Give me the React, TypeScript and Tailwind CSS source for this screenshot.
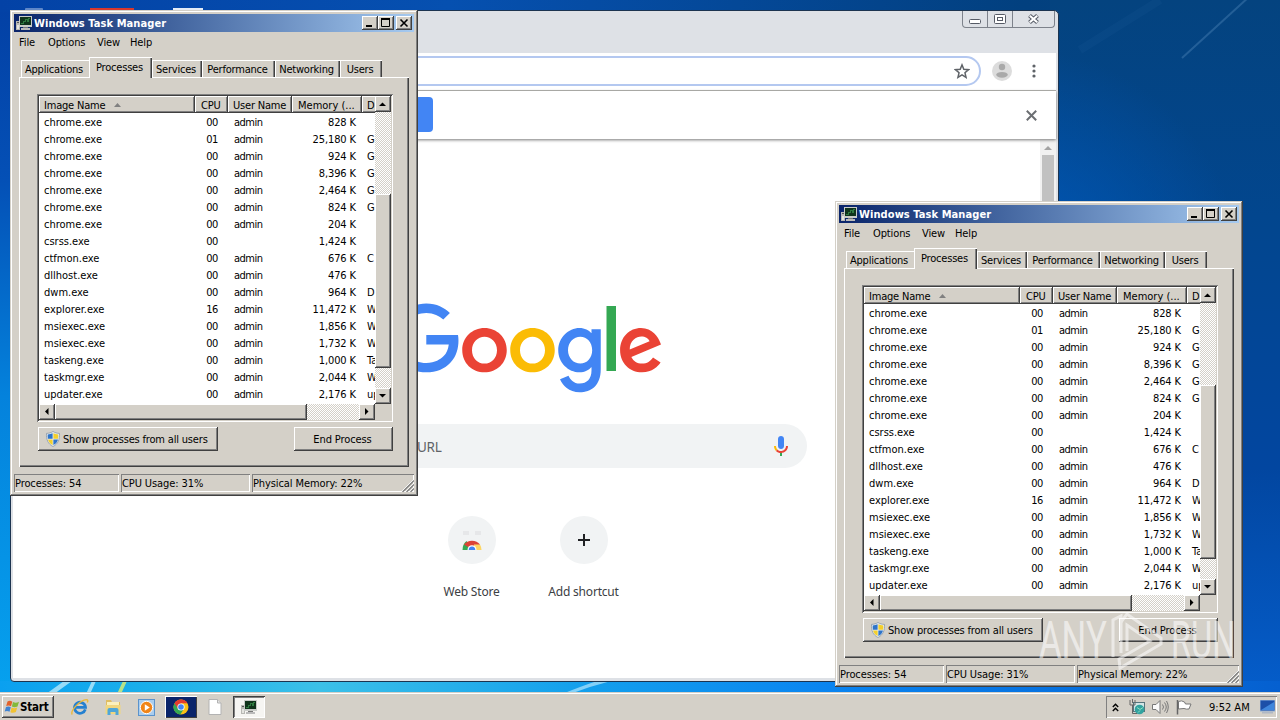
import type { ReactNode } from "react";
import clsx from "clsx";

type Process = {
  name: string;
  cpu: string;
  user: string;
  memory: string;
  description: string;
};

const processes: Process[] = [
  { name: "chrome.exe", cpu: "00", user: "admin", memory: "828 K", description: "" },
  { name: "chrome.exe", cpu: "01", user: "admin", memory: "25,180 K", description: "G" },
  { name: "chrome.exe", cpu: "00", user: "admin", memory: "924 K", description: "G" },
  { name: "chrome.exe", cpu: "00", user: "admin", memory: "8,396 K", description: "G" },
  { name: "chrome.exe", cpu: "00", user: "admin", memory: "2,464 K", description: "G" },
  { name: "chrome.exe", cpu: "00", user: "admin", memory: "824 K", description: "G" },
  { name: "chrome.exe", cpu: "00", user: "admin", memory: "204 K", description: "" },
  { name: "csrss.exe", cpu: "00", user: "", memory: "1,424 K", description: "" },
  { name: "ctfmon.exe", cpu: "00", user: "admin", memory: "676 K", description: "C" },
  { name: "dllhost.exe", cpu: "00", user: "admin", memory: "476 K", description: "" },
  { name: "dwm.exe", cpu: "00", user: "admin", memory: "964 K", description: "D" },
  { name: "explorer.exe", cpu: "16", user: "admin", memory: "11,472 K", description: "W" },
  { name: "msiexec.exe", cpu: "00", user: "admin", memory: "1,856 K", description: "W" },
  { name: "msiexec.exe", cpu: "00", user: "admin", memory: "1,732 K", description: "W" },
  { name: "taskeng.exe", cpu: "00", user: "admin", memory: "1,000 K", description: "Ta" },
  { name: "taskmgr.exe", cpu: "00", user: "admin", memory: "2,044 K", description: "W" },
  { name: "updater.exe", cpu: "00", user: "admin", memory: "2,176 K", description: "up" },
];

const tabs = [
  { label: "Applications", width: "w-[68px]" },
  { label: "Processes", width: "w-[63px]" },
  { label: "Services", width: "w-[50px]" },
  { label: "Performance", width: "w-[73px]" },
  { label: "Networking", width: "w-[65px]" },
  { label: "Users", width: "w-[42px]" },
];

// classic Windows bevels
const raised =
  "bg-[#d4d0c8] shadow-[inset_-1px_-1px_0_#404040,inset_1px_1px_0_#fff,inset_-2px_-2px_0_#808080]";
const sunken = "shadow-[inset_1px_1px_0_#808080,inset_-1px_-1px_0_#fff]";
const checker =
  "bg-[conic-gradient(#fff_25%,#d4d0c8_0_50%,#fff_0_75%,#d4d0c8_0)] bg-[length:2px_2px]";

const TaskManagerIcon = () => (
  <svg width="16" height="16" viewBox="0 0 16 16" shapeRendering="crispEdges">
    <rect x="0" y="6" width="4" height="9" fill="#b8b8b4" />
    <rect x="1" y="7" width="2" height="1" fill="#555" />
    <rect x="1" y="10" width="2" height="4" fill="#e4e4e0" />
    <rect x="3" y="1" width="13" height="11" fill="#c9cbc8" />
    <rect x="4" y="2" width="11" height="8" fill="#10331b" />
    <path d="M5 8h2V6h2V4h2v2h1V3h2" fill="none" stroke="#2f7a40" />
    <rect x="7" y="12" width="5" height="1" fill="#777" />
    <rect x="5" y="13" width="9" height="2" fill="#bbb" />
  </svg>
);

const Shield = () => (
  <svg width="16" height="16" viewBox="0 0 16 16">
    <path d="M8 .5c2 1.300 4 1.800 6.500 1.900.3 6-1.300 10.500-6.500 13.100C2.800 12.900 1.200 8.400 1.500 2.400 4 2.300 6 1.800 8 .5z" fill="#e8eef4" stroke="#8997a5" strokeWidth=".8" />
    <path d="M7.600 2.300v5.400H2.900C2.700 6.200 2.600 5 2.700 3.500c1.900-.1 3.500-.5 4.900-1.200z" fill="#2f74c8" />
    <path d="M8.400 2.300v5.400h4.700c.2-1.500.3-2.700.2-4.200-1.900-.1-3.500-.5-4.900-1.200z" fill="#f3cf2c" />
    <path d="M7.600 8.400v5.700C5 12.600 3.600 10.800 3 8.400z" fill="#f3cf2c" />
    <path d="M8.400 8.400v5.700c2.600-1.500 4-3.300 4.600-5.700z" fill="#2f74c8" />
  </svg>
);

const arrows = {
  up: "M4 10h7L7.500 6.500z",
  down: "M4 6h7l-3.500 3.500z",
  left: "M9.500 4v7L6 7.500z",
  right: "M6 4v7l3.500-3.500z",
};

const ScrollButton = ({ dir }: { dir: keyof typeof arrows }) => (
  <div className={clsx("size-4 shrink-0", raised)}>
    <svg width="16" height="16" viewBox="0 0 16 16">
      <path d={arrows[dir]} fill="#000" />
    </svg>
  </div>
);

const CaptionButton = ({ children }: { children: ReactNode }) => (
  <div className={clsx("h-[14px] w-4", raised)}>
    <svg width="16" height="14" viewBox="0 0 16 14" fill="none" stroke="#000">
      {children}
    </svg>
  </div>
);

const HeaderCell = ({ className, children }: { className?: string; children: ReactNode }) => (
  <div className={clsx("h-full shrink-0 overflow-hidden pl-[5px] leading-[19px] tracking-[-0.200px]", raised, className)}>
    {children}
  </div>
);

const StatusCell = ({ className, children }: { className?: string; children: ReactNode }) => (
  <div className={clsx("pl-px leading-[20px] tracking-[-0.100px]", sunken, className)}>{children}</div>
);

const TaskManager = ({ className }: { className: string }) => (
  <div
    className={clsx(
      "absolute flex h-[486px] w-[408px] flex-col whitespace-nowrap bg-[#d4d0c8] p-1 text-black",
      "shadow-[inset_-1px_-1px_0_#404040,inset_1px_1px_0_#d4d0c8,inset_-2px_-2px_0_#808080,inset_2px_2px_0_#fff]",
      className,
    )}
  >
    <div className="flex h-[18px] shrink-0 items-center bg-linear-to-r from-[#0a246a] to-[#a6caf0] pr-[2px] pl-[2px]">
      <TaskManagerIcon />
      <span className="ml-[2px] grow pt-[2px] text-[11px] font-bold tracking-[0.080px] text-white">Windows Task Manager</span>
      <CaptionButton>
        <path d="M4 10h6" strokeWidth="2" />
      </CaptionButton>
      <CaptionButton>
        <path d="M3.500 3v7.500h8V3" />
        <path d="M3 3h9" strokeWidth="2" />
      </CaptionButton>
      <div className="w-[2px]" />
      <CaptionButton>
        <path d="M4.500 3.500l7 7m0-7l-7 7" strokeWidth="1.600" />
      </CaptionButton>
    </div>

    <div className="flex h-5 shrink-0 items-center pt-[2px] pl-[5px] tracking-[-0.120px]">
      <span className="w-[29px]">File</span>
      <span className="w-[49px]">Options</span>
      <span className="w-[33px]">View</span>
      <span>Help</span>
    </div>

    <div className="mt-[5px] ml-[7px] flex h-5 shrink-0 items-end">
      {tabs.map((tab) => {
        const active = tab.label === "Processes";
        return (
          <div
            key={tab.label}
            className={clsx(
              "shrink-0 border-t border-l border-white pr-[3px] text-center tracking-[-0.200px]",
              tab.width,
              active ? "relative z-10 -mb-px h-[21px] leading-[19px]" : "h-[17px] leading-[17px]",
              tab.label !== "Applications" && "shadow-[inset_-1px_0_0_#404040,inset_-2px_0_0_#808080]",
              tab.label === "Applications" && "pr-0",
              active && "bg-[#d4d0c8]",
            )}
          >
            {tab.label}
          </div>
        );
      })}
    </div>

    <div className="mr-[5px] ml-[5px] flex h-[390px] shrink-0 flex-col pt-[17px] pr-4 pl-[18px] shadow-[inset_1px_1px_0_#fff,inset_-1px_-1px_0_#404040,inset_-2px_-2px_0_#808080]">
      <div className="flex h-[328px] w-[356px] shrink-0 flex-col p-[2px] shadow-[inset_1px_1px_0_#808080,inset_-1px_-1px_0_#fff,inset_2px_2px_0_#404040,inset_-2px_-2px_0_#d4d0c8]">
        <div className="flex h-[308px]">
          <div className="w-[336px] overflow-hidden bg-white">
            <div className="flex h-[17px]">
              <HeaderCell className="w-[156px]">
                Image Name
                <svg className="ml-[9px] inline-block align-[2px]" width="7" height="4" viewBox="0 0 7 4">
                  <path d="M0 4h7L3.500 0z" fill="#808080" />
                </svg>
              </HeaderCell>
              <HeaderCell className="w-[33px]">
                <span className="ml-px">CPU</span>
              </HeaderCell>
              <HeaderCell className="w-16">User Name</HeaderCell>
              <HeaderCell className="w-[70px]">
                <span className="ml-px tracking-normal">Memory (...</span>
              </HeaderCell>
              <HeaderCell className="w-[60px]">D</HeaderCell>
            </div>
            {processes.map((p, i) => (
              <div key={i} className="flex h-[17px] leading-[19px]">
                <span className="w-[156px] shrink-0 pl-[5px]">{p.name}</span>
                <span className="w-[23px] shrink-0 text-right tracking-[-0.400px]">{p.cpu}</span>
                <span className="ml-[10px] w-16 shrink-0 pl-[6px] tracking-[-0.500px]">{p.user}</span>
                <span className="w-[64px] shrink-0 text-right tracking-[-0.100px]">{p.memory}</span>
                <span className="ml-[11px] shrink-0">{p.description}</span>
              </div>
            ))}
          </div>
          <div className={clsx("flex w-4 flex-col", checker)}>
            <ScrollButton dir="up" />
            <div className="h-[82px]" />
            <div className={clsx("h-[174px]", raised)} />
            <div className="grow" />
            <ScrollButton dir="down" />
          </div>
        </div>
        <div className="flex h-4 bg-[#d4d0c8]">
          <div className={clsx("flex w-[336px]", checker)}>
            <ScrollButton dir="left" />
            <div className={clsx("w-[252px]", raised)} />
            <div className="grow" />
            <ScrollButton dir="right" />
          </div>
        </div>
      </div>
      <div className="mt-[5px] flex h-6 justify-between pl-px">
        <div className={clsx("flex w-[180px] items-center pl-[7px]", raised)}>
          <Shield />
          <span className="ml-[2px] pt-[2px] tracking-[-0.180px]">Show processes from all users</span>
        </div>
        <div className={clsx("w-[99px] pr-[2px] text-center leading-[26px] tracking-[-0.100px]", raised)}>End Process</div>
      </div>
    </div>

    <div className="mt-[7px] flex h-[18px] shrink-0 gap-[2px]">
      <StatusCell className="w-[105px]">Processes: 54</StatusCell>
      <StatusCell className="w-[129px]">CPU Usage: 31%</StatusCell>
      <StatusCell className="flex grow justify-between">
        Physical Memory: 22%
        <svg className="self-end" width="13" height="13" viewBox="0 0 13 13">
          <path d="M0 13L13 0M4 13l9-9M8 13l5-5" stroke="#fff" />
          <path d="M1.500 13L13 1.500M5.500 13L13 5.500M9.500 13L13 9.500" stroke="#808080" strokeWidth="1.400" />
        </svg>
      </StatusCell>
    </div>
  </div>
);

const GoogleLogo = () => (
  <svg width="272" height="92" viewBox="0 0 272 92">
    <path fill="#4285f4" d="M35.290 41.410V32H67c.31 1.640.47 3.580.47 5.680 0 7.060-1.930 15.790-8.150 22.010-6.050 6.300-13.780 9.660-24.020 9.660C16.320 69.350.36 53.890.36 34.910.36 15.930 16.320.47 35.300.47c10.500 0 17.980 4.120 23.600 9.490l-6.640 6.640c-4.030-3.780-9.490-6.720-16.970-6.720-13.860 0-24.700 11.170-24.700 25.030 0 13.860 10.840 25.030 24.700 25.030 8.990 0 14.110-3.610 17.390-6.890 2.660-2.660 4.410-6.460 5.100-11.650l-22.490.01z" />
    <path fill="#ea4335" d="M115.750 47.180c0 12.770-9.990 22.180-22.250 22.180s-22.250-9.410-22.250-22.180C71.250 34.320 81.240 25 93.500 25s22.250 9.320 22.250 22.180zm-9.740 0c0-7.980-5.790-13.440-12.510-13.440S80.990 39.200 80.990 47.180c0 7.900 5.790 13.440 12.510 13.440s12.510-5.550 12.510-13.440z" />
    <path fill="#fbbc05" d="M163.750 47.180c0 12.770-9.990 22.180-22.250 22.180s-22.250-9.410-22.250-22.180c0-12.860 9.990-22.180 22.250-22.180s22.250 9.320 22.250 22.180zm-9.740 0c0-7.980-5.790-13.440-12.510-13.440s-12.510 5.460-12.510 13.440c0 7.900 5.790 13.440 12.510 13.440s12.510-5.550 12.510-13.440z" />
    <path fill="#4285f4" d="M209.750 26.340v39.820c0 16.380-9.660 23.070-21.080 23.070-10.750 0-17.220-7.190-19.660-13.070l8.480-3.530c1.510 3.610 5.210 7.870 11.170 7.870 7.310 0 11.840-4.510 11.840-13v-3.190h-.34c-2.180 2.690-6.380 5.040-11.680 5.040-11.090 0-21.250-9.660-21.250-22.090 0-12.520 10.160-22.260 21.250-22.260 5.290 0 9.490 2.350 11.680 4.960h.34v-3.610h9.250zm-8.560 20.920c0-7.810-5.210-13.520-11.840-13.520-6.720 0-12.350 5.710-12.350 13.520 0 7.730 5.630 13.360 12.350 13.360 6.630 0 11.840-5.630 11.840-13.360z" />
    <path fill="#34a853" d="M225 3v65h-9.500V3h9.500z" />
    <path fill="#ea4335" d="M262.020 54.480l7.560 5.040c-2.440 3.610-8.320 9.830-18.480 9.830-12.600 0-22.010-9.740-22.010-22.180 0-13.190 9.490-22.180 20.920-22.180 11.510 0 17.140 9.160 18.980 14.110l1.010 2.520-29.650 12.280c2.270 4.450 5.800 6.720 10.750 6.720 4.960 0 8.400-2.440 10.920-6.140zm-23.270-7.980l19.820-8.230c-1.090-2.770-4.370-4.700-8.230-4.700-4.950 0-11.840 4.370-11.590 12.930z" />
  </svg>
);

const Mic = () => (
  <svg width="24" height="24" viewBox="0 0 24 24">
    <path fill="#4285f4" d="M12 15c1.700 0 3-1.300 3-3V5c0-1.700-1.300-3-3-3S9 3.300 9 5v7c0 1.700 1.300 3 3 3z" />
    <path fill="#34a853" d="M11 18.100h2V22h-2z" />
    <path fill="#fbbc05" d="M7 12H5c0 1.900.8 3.700 2 4.900l1.400-1.400C7.600 14.600 7 13.300 7 12z" />
    <path fill="#ea4335" d="M12 17c-1.400 0-2.600-.5-3.600-1.500L7 16.900C8.300 18.200 10 19 12 19c3.900 0 7-3.100 7-7h-2c0 2.800-2.200 5-5 5z" />
  </svg>
);

const Shortcut = ({ label, children }: { label: string; children: ReactNode }) => (
  <div className="flex w-28 flex-col items-center">
    <div className="flex size-12 items-center justify-center rounded-full bg-[#f1f3f4]">{children}</div>
    <span className="mt-[19px] font-['Noto_Sans',sans-serif] text-[12px] leading-[18px] tracking-[-0.200px] text-[#3c4043]">
      {label}
    </span>
  </div>
);

const ChromeWindow = () => (
  <div className="absolute top-[10px] left-[10px] flex h-[672px] w-[1049px] flex-col rounded-t-[5px] rounded-b-[4px] border border-[#1c3450] bg-[#dee1e6] pr-[2px] pb-[3px] pl-[2px]">
    <div className="flex h-[42px] shrink-0 justify-end pr-[1px]">
      <div className="flex h-[17px] w-[93px] rounded-b-[4px] border border-t-0 border-[#7d828b]">
        <div className="w-[25px] border-r border-[#7d828b]">
          <svg width="24" height="16" viewBox="0 0 24 16">
            <rect x="6.500" y="8.500" width="11" height="4" rx="1" fill="#fff" stroke="#565b66" />
          </svg>
        </div>
        <div className="w-[25px] border-r border-[#7d828b]">
          <svg width="24" height="16" viewBox="0 0 24 16" fill="#fff" stroke="#565b66">
            <rect x="6.500" y="3.500" width="11" height="9" rx="1" />
            <rect x="9.500" y="6.500" width="5" height="3" />
          </svg>
        </div>
        <svg width="41" height="16" viewBox="0 0 41 16">
          <path d="M16.500 4.500l8 7m0-7l-8 7" stroke="#565b66" strokeWidth="4.200" />
          <path d="M16.800 4.700l7.400 6.600m0-6.600l-7.400 6.600" stroke="#fff" strokeWidth="2.200" />
        </svg>
      </div>
    </div>

    <div className="flex h-[38px] shrink-0 items-center border-b border-[#b3b2ae] bg-white pb-px">
      <div className="ml-[110px] flex h-[30px] w-[858px] items-center justify-end rounded-full border-2 border-[#b4c8f0] pr-[9px]">
        <svg width="16" height="16" viewBox="0 0 24 24" fill="none" stroke="#5f6368" strokeWidth="2.200">
          <path d="M12 2.800l2.700 6.600 7.100.6-5.400 4.600 1.700 7L12 17.900l-6.100 3.700 1.700-7L2.200 10l7.100-.6z" />
        </svg>
      </div>
      <svg className="ml-[11px]" width="20" height="20" viewBox="0 0 20 20">
        <circle cx="10" cy="10" r="10" fill="#dcdcdc" />
        <circle cx="10" cy="6" r="3.200" fill="#a9a9a9" />
        <ellipse cx="10" cy="13.800" rx="5.800" ry="2.900" fill="#a9a9a9" />
      </svg>
      <svg className="ml-[20px]" width="4" height="14" viewBox="0 0 4 14" fill="#5f6368">
        <circle cx="2" cy="2" r="1.600" />
        <circle cx="2" cy="7" r="1.600" />
        <circle cx="2" cy="12" r="1.600" />
      </svg>
    </div>

    <div className="relative flex h-12 shrink-0 items-center bg-white shadow-[0_1px_3px_#777]">
      <div className="mb-px ml-[300px] h-[35px] w-[120px] rounded-[4px] bg-[#4285f4]" />
      <svg className="mr-[19px] ml-auto" width="11" height="11" viewBox="0 0 11 11">
        <path d="M.8.8l9.400 9.400M10.200.8L.8 10.200" stroke="#6b6e72" strokeWidth="2" />
      </svg>
    </div>

    <div className="flex grow bg-white">
      <div className="flex w-[1027px] flex-col items-center pt-[164px]">
        <div className="pl-px">
          <GoogleLogo />
        </div>
        <div className="mt-[29px] flex h-11 w-[560px] items-center justify-between rounded-full bg-[#f1f3f4] pr-[14px] pl-[14px]">
          <span className="w-[181px] pt-[2px] text-right font-['Noto_Sans',sans-serif] text-[13.500px] tracking-[-0.300px] whitespace-nowrap text-[#5f6368]">
            Search Google or type a URL
          </span>
          <Mic />
        </div>
        <div className="mt-12 flex pl-[2px]">
          <Shortcut label="Web Store">
            <svg width="24" height="24" viewBox="0 0 24 24">
              <path d="M3 3h6v4H3zM15 3h6v4h-6z" fill="#e6e7e9" />
              <path d="M2.500 22a9.500 11 0 0 1 4-9l5.500 9z" fill="#34a853" />
              <path d="M4 16.500a9.500 8 0 0 1 16 0L17 19H8z" fill="#db4437" />
              <path d="M14 16.500h6q1.500 2.500 1.500 5.500H14z" fill="#fdd663" />
              <path d="M7.500 22a4.500 4.800 0 0 1 9 0z" fill="#fff" />
              <path d="M8.700 22a3.300 3.500 0 0 1 6.600 0z" fill="#4285f4" />
            </svg>
          </Shortcut>
          <Shortcut label="Add shortcut">
            <svg width="12" height="12" viewBox="0 0 12 12">
              <path d="M0 6h12M6 0v12" stroke="#202124" strokeWidth="2" />
            </svg>
          </Shortcut>
        </div>
      </div>
      <div className="flex grow flex-col items-center bg-[#f1f1f1]">
        <svg width="16" height="16" viewBox="0 0 16 16">
          <path d="M4 11h8L8 7z" fill="#a3a3a3" />
        </svg>
        <div className="h-[300px] w-3 bg-[#c1c1c1]" />
      </div>
    </div>
  </div>
);

const Wallpaper = () => (
  <svg className="absolute inset-0" width="1280" height="720" viewBox="0 0 1280 720">
    <defs>
      <linearGradient id="left" x1="0" y1="0" x2="0" y2="1">
        <stop offset="0" stopColor="#0340a4" />
        <stop offset=".25" stopColor="#0450b6" />
        <stop offset=".55" stopColor="#0482dc" />
        <stop offset="1" stopColor="#06a4f0" />
      </linearGradient>
      <linearGradient id="top" x1="0" y1="0" x2="1" y2="0">
        <stop offset="0" stopColor="#0342a6" />
        <stop offset=".35" stopColor="#0650b0" />
        <stop offset=".8" stopColor="#02407f" />
        <stop offset="1" stopColor="#0a4480" />
      </linearGradient>
      <linearGradient id="right" x1="0" y1="0" x2="0" y2="1">
        <stop offset="0" stopColor="#04437f" />
        <stop offset=".3" stopColor="#02468e" />
        <stop offset=".65" stopColor="#0246a0" />
        <stop offset="1" stopColor="#0560d0" />
      </linearGradient>
      <radialGradient id="glow" gradientUnits="userSpaceOnUse" cx="1020" cy="270" r="220">
        <stop offset="0" stopColor="#0058b8" />
        <stop offset="1" stopColor="#0058b8" stopOpacity="0" />
      </radialGradient>
      <linearGradient id="bottom" x1="0" y1="0" x2="1" y2="0">
        <stop offset="0" stopColor="#0aa0f0" />
        <stop offset=".12" stopColor="#1cb0ea" />
        <stop offset=".25" stopColor="#3cc0e8" />
        <stop offset=".45" stopColor="#14a0ec" />
        <stop offset=".65" stopColor="#0a84f0" />
        <stop offset="1" stopColor="#0560d0" />
      </linearGradient>
    </defs>
    <rect width="1280" height="720" fill="url(#left)" />
    <rect width="1280" height="12" fill="url(#top)" />
    <rect x="1050" width="230" height="720" fill="url(#right)" />
    <rect x="1050" width="230" height="600" fill="url(#glow)" />
    <path d="M1250-4L1182 58" stroke="#5f93c4" strokeWidth="2" opacity=".35" />
    <path d="M1160 0L1080 50" stroke="#3f78b4" strokeWidth="8" opacity=".08" />
    <rect y="681" width="1280" height="13" fill="url(#bottom)" />
    <path d="M46 694l18-13h8l-18 13zM86 694l6-13h4l-6 13z" fill="#c4ecfa" opacity=".75" />
    <path d="M117 694l6-13h4l-6 13z" fill="#e0f070" opacity=".8" />
    <path d="M562 694q20-8 35-13h14q-20 5-41 13z" fill="#b4e6fc" opacity=".7" />
    <rect x="25" y="8" width="18" height="3" rx="1" fill="#5f87c8" />
    <rect x="90" y="8" width="44" height="3" fill="#d8382c" />
    <rect x="173" y="8" width="30" height="3" fill="#e4ecf6" />
  </svg>
);

const WindowsFlag = () => (
  <svg width="16" height="16" viewBox="0 0 16 16">
    <path d="M3.500 2.500q2.500-1.500 4.800.2L7 7.300q-2.200-1.500-4.800-.2z" fill="#e2622b" />
    <path d="M9 3q2.700 1.500 6-.2l-1.500 4.600q-2.800 1.500-5.600.2z" fill="#83b93a" />
    <path d="M2 8q2.500-1.300 4.800.2l-1.300 4.500Q3.200 11.200.7 12.500z" fill="#3f83d2" />
    <path d="M7.600 8.500q2.700 1.500 5.600-.1L11.900 13q-2.700 1.400-5.500.2z" fill="#f1c232" />
  </svg>
);

const InternetExplorerIcon = () => (
  <svg width="18" height="18" viewBox="0 0 18 18" fill="none">
    <path d="M14.300 11.300A5.500 5.500 0 1 1 14.500 9.300H5" stroke="#2580d0" strokeWidth="2.800" />
    <path d="M1.300 16.500C-1.200 13 9 2 15.500 1.600c1.600 0 1.500 1.400.8 2.900" stroke="#eab83a" strokeWidth="1.400" />
  </svg>
);

const ExplorerIcon = () => (
  <svg width="18" height="18" viewBox="0 0 18 18">
    <path d="M2 2h5l1 2h8v12H2z" fill="#e0bd62" />
    <path d="M3 4h12v5H3z" fill="#fbf0bd" />
    <path d="M1.500 7h15v9h-15z" fill="#f0d680" />
    <path d="M3.500 17v-5q0-2 2-2h7q2 0 2 2v5h-3v-3h-5v3z" fill="#4fa6d8" />
  </svg>
);

const MediaPlayerIcon = () => (
  <svg width="17" height="17" viewBox="0 0 17 17">
    <rect x=".5" y=".5" width="16" height="16" fill="#a9cdee" stroke="#5b93cc" />
    <circle cx="8.500" cy="8.500" r="6.200" fill="#f08519" stroke="#fff" />
    <path d="M6.800 5.200v6.600l5-3.300z" fill="#fff" />
  </svg>
);

const ChromeIcon = () => (
  <svg width="16" height="16" viewBox="0 0 16 16">
    <circle cx="8" cy="8" r="7.500" fill="#fbc116" />
    <path d="M8 8L1.500 4.200A7.500 7.500 0 0 0 7.300 15.500L11 9.700z" fill="#34a853" />
    <path d="M1.500 4.250A7.500 7.500 0 0 1 14.500 4.250H8L5 9.700z" fill="#e33b2e" />
    <circle cx="8" cy="8" r="3.600" fill="#fff" />
    <circle cx="8" cy="8" r="2.800" fill="#4285f4" />
  </svg>
);

const Taskbar = () => (
  <div className="absolute top-[692px] left-0 flex h-7 w-full items-center border-t border-[#d4d0c8] bg-[#d4d0c8] pt-px pr-[3px] pl-[2px] text-black shadow-[inset_0_1px_0_#fff]">
    <div className={clsx("flex h-[22px] w-[52px] items-center pl-[2px]", raised)}>
      <WindowsFlag />
      <span className="pt-px text-[11.500px] font-bold tracking-[-0.200px]">Start</span>
    </div>
    <div className="flex grow items-center pl-[17px]">
      <InternetExplorerIcon />
      <div className="ml-[15px]">
        <ExplorerIcon />
      </div>
      <div className="ml-[16px]">
        <MediaPlayerIcon />
      </div>
      <div className="ml-[10px] flex h-[22px] w-8 items-center justify-center bg-[#0a246a] shadow-[inset_1px_1px_0_#fff,inset_-1px_-1px_0_#404040]">
        <ChromeIcon />
      </div>
      <svg className="ml-[11px]" width="14" height="16" viewBox="0 0 14 16">
        <path d="M1 .5h8.500L13 4v11.500H1z" fill="#fff" stroke="#b3b3b3" />
        <path d="M9.500.5V4H13" fill="#e4e4e4" stroke="#b3b3b3" />
      </svg>
      <div className="ml-[11px] flex h-[22px] w-8 items-center justify-center bg-[#f6f5f2] shadow-[inset_1px_1px_0_#404040,inset_-1px_-1px_0_#fff,inset_2px_2px_0_#808080]">
        <TaskManagerIcon />
      </div>
    </div>
    <div className={clsx("flex h-[22px] w-[171px] items-center pl-[6px]", sunken)}>
      <svg width="7" height="9" viewBox="0 0 7 9" fill="none" stroke="#000" strokeWidth="1.400">
        <path d="M.8 4l2.700-2.700L6.200 4M.8 8l2.700-2.700L6.200 8" />
      </svg>
      <svg className="ml-[10px]" width="17" height="16" viewBox="0 0 17 16">
        <rect x="4.500" y="3.500" width="11" height="9" fill="#d3e6e6" stroke="#56747c" />
        <circle cx="10.500" cy="10.500" r="4.800" fill="#32a3a0" />
        <path d="M8 8.500l3 2 3-2m-5 5l2-2" stroke="#8fe0c0" fill="none" />
        <path d="M1 1v5h5V1M3.500 0v4M3.500 6v8.500H8" fill="none" stroke="#666" />
      </svg>
      <svg className="ml-[6px]" width="17" height="16" viewBox="0 0 17 16" fill="#fafafa" stroke="#777">
        <path d="M.5 5.500H4L8 1.500v13l-4-4H.5z" />
        <path d="M10.500 5.500q2 2.500 0 5M12.500 3.500q3.500 4.500 0 9M14.500 2q3.500 6 0 12" fill="none" />
      </svg>
      <svg className="ml-[7px]" width="16" height="16" viewBox="0 0 16 16">
        <path d="M2.500 2.500q3-1.500 6 .5l1 2h5.500l-2 5q-2.500.5-5-.5l-5.500.5z" fill="#fff" stroke="#777" />
        <path d="M1.500 1v14.500" stroke="#666" strokeWidth="1.500" />
      </svg>
      <span className="ml-[17px] pt-[2px] whitespace-nowrap">9:52 AM</span>
      <svg className="mr-[2px] ml-auto" width="15" height="14" viewBox="0 0 15 14">
        <rect width="15" height="11" fill="#1c4fa8" stroke="#8fb0d8" />
        <path d="M1 10L14 2v8z" fill="#3f86dc" />
        <path d="M2 12.500h11" stroke="#b0b8c4" strokeWidth="2" />
      </svg>
    </div>
  </div>
);

const Watermark = () => (
  <div className="absolute top-[611px] left-[1039px] flex h-[60px] w-[194px] items-center justify-between font-['Roboto',sans-serif] text-[51px] leading-[60px] text-white opacity-55">
    <span className="w-[66px]">
      <span className="inline-block origin-left scale-x-[0.680]">ANY</span>
    </span>
    <svg width="56" height="60" viewBox="0 0 56 60" fill="none" stroke="#fff" strokeWidth="3">
      <path d="M3 46V9l8-4v37" />
      <path d="M11 11l6-8 34 24v6L10 57l-1-9 31-18L17 14v26" />
    </svg>
    <span className="w-[62px]">
      <span className="inline-block origin-left scale-x-[0.640]">RUN</span>
    </span>
  </div>
);

const App = () => {
  return (
    <div className="relative h-[720px] w-[1280px] overflow-hidden font-['DejaVu_Sans_Condensed','DejaVu_Sans',sans-serif] text-[11px]">
      <Wallpaper />
      <ChromeWindow />
      <TaskManager className="top-[10px] left-[10px]" />
      <TaskManager className="top-[201px] left-[835px]" />
      <Taskbar />
      <Watermark />
    </div>
  );
};

export default App;
